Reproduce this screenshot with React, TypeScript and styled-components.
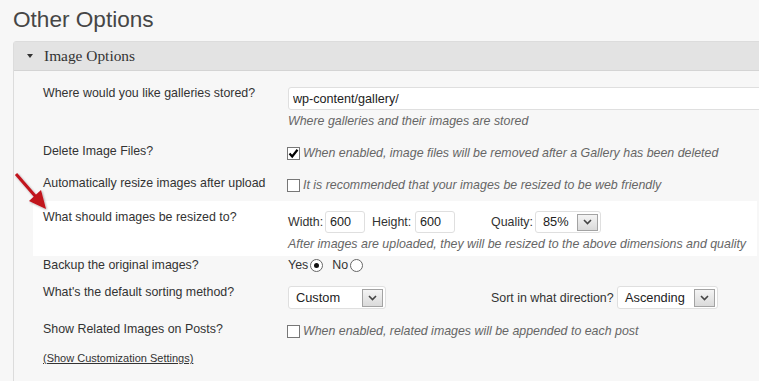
import React from "react";
import styled, { createGlobalStyle } from "styled-components";

const GlobalStyle = createGlobalStyle`
  html, body {
    margin: 0;
    padding: 0;
    background: #f7f7f7;
  }
  body {
    font-family: "Liberation Sans", Arial, sans-serif;
    color: #333;
    overflow: hidden;
  }
`;

const Page = styled.div`
  position: relative;
  width: 759px;
  height: 381px;
  overflow: hidden;
  padding-left: 13px;
  box-sizing: border-box;
`;

const Title = styled.h2`
  margin: 0;
  padding-top: 6px;
  font-size: 22.6px;
  line-height: 28px;
  font-weight: normal;
  color: #464646;
`;

const Panel = styled.div`
  margin-top: 7px;
  width: 780px;
  height: 400px;
  border: 1px solid #dcdcdc;
  border-radius: 3px 0 0 0;
  background: #f7f7f7;
`;

const PanelHeader = styled.div`
  display: flex;
  align-items: center;
  height: 28px;
  padding-left: 13px;
  background: #e3e3e3;
  border-bottom: 1px solid #d4d4d4;
  font-family: "Liberation Serif", "Times New Roman", serif;
  font-size: 15.4px;
  color: #333;
`;

const Caret = styled.span`
  width: 0;
  height: 0;
  margin-right: 11px;
  border-left: 3.5px solid transparent;
  border-right: 3.5px solid transparent;
  border-top: 4px solid #333;
`;

const PanelBody = styled.div`
  padding: 0 37px 0 19px;
`;

const Row = styled.div<{ $top: number; $highlight?: boolean }>`
  display: grid;
  grid-template-columns: 245px 1fr;
  align-items: start;
  margin-top: ${(p) => (p.$highlight ? 8 : 0)}px;
  padding: ${(p) => p.$top}px 0 ${(p) => (p.$highlight ? 4 : 0)}px 10px;
  background: ${(p) => (p.$highlight ? "#fff" : "transparent")};
`;

const Label = styled.div`
  font-size: 12.4px;
  line-height: 16px;
  color: #333;
`;

const Field = styled.div`
  font-size: 12.4px;
  line-height: 16px;
  color: #333;
`;

const TextInput = styled.input<{ $w: number; $h: number }>`
  display: block;
  box-sizing: border-box;
  width: ${(p) => p.$w}px;
  height: ${(p) => p.$h}px;
  margin: 0;
  padding: 0 4px;
  border: 1px solid #dfdfdf;
  border-radius: 3px;
  background: #fff;
  font-family: "Liberation Sans", Arial, sans-serif;
  font-size: 12.6px;
  color: #222;
  outline: none;
`;

const Desc = styled.div`
  margin-top: 3px;
  font-style: italic;
  color: #666;
  white-space: nowrap;
`;

const Line = styled.div<{ $top?: number }>`
  display: flex;
  align-items: center;
  margin-top: ${(p) => p.$top ?? 0}px;
  white-space: nowrap;
`;

const CheckLine = styled.div`
  display: flex;
  align-items: center;
  gap: 3px;
  padding-top: 2px;
  margin-left: -1px;
  font-style: italic;
  color: #666;
  white-space: nowrap;
`;

const Box = styled.span`
  display: inline-flex;
  align-items: center;
  justify-content: center;
  box-sizing: border-box;
  width: 13px;
  height: 13px;
  border: 1px solid #777;
  background: #fff;
`;

const InlineLabel = styled.span<{ $w: number; $left?: number }>`
  display: inline-block;
  width: ${(p) => p.$w}px;
  margin-left: ${(p) => p.$left ?? 0}px;
  white-space: nowrap;
`;

const Select = styled.div<{ $w: number; $h: number }>`
  display: flex;
  align-items: center;
  box-sizing: border-box;
  width: ${(p) => p.$w}px;
  height: ${(p) => p.$h}px;
  padding: 0 2px 0 7px;
  border: 1px solid #dfdfdf;
  border-radius: 3px;
  background: #fff;
  font-size: 12.8px;
  color: #222;
`;

const SelectButton = styled.span<{ $h: number }>`
  display: inline-flex;
  align-items: center;
  justify-content: center;
  box-sizing: border-box;
  margin-left: auto;
  width: 21px;
  height: ${(p) => p.$h}px;
  border: 1px solid #a3a3a3;
  background: linear-gradient(#f4f4f4, #dadada);
`;

const Radio = styled.span<{ $checked?: boolean }>`
  display: inline-flex;
  align-items: center;
  justify-content: center;
  box-sizing: border-box;
  width: 13px;
  height: 13px;
  margin: 0 9px 0 2px;
  border: 1px solid #666;
  border-radius: 50%;
  background: #fff;
  &::after {
    content: "";
    display: ${(p) => (p.$checked ? "block" : "none")};
    width: 5px;
    height: 5px;
    border-radius: 50%;
    background: #111;
  }
`;

const CustomLink = styled.a`
  display: block;
  padding: 11px 0 0 10px;
  font-size: 11px;
  line-height: 16px;
  color: #333;
  text-decoration: underline;
`;

const Pointer = styled.svg`
  position: absolute;
  left: 0;
  top: 160px;
  pointer-events: none;
`;

function Check() {
  return (
    <svg width="11" height="11" viewBox="0 0 11 11">
      <path d="M1.5 5.5 L4.2 8.5 L9.5 1.8" fill="none" stroke="#000" strokeWidth="2.2" />
    </svg>
  );
}

function Dropdown({ w, h, value }: { w: number; h: number; value: string }) {
  return (
    <Select $w={w} $h={h}>
      {value}
      <SelectButton $h={h - 5}>
        <svg width="9" height="6" viewBox="0 0 9 6">
          <path d="M1 1 L4.5 4.5 L8 1" fill="none" stroke="#444" strokeWidth="1.6" />
        </svg>
      </SelectButton>
    </Select>
  );
}

export default function App() {
  return (
    <Page>
      <GlobalStyle />
      <Title>Other Options</Title>
      <Panel>
        <PanelHeader>
          <Caret />
          Image Options
        </PanelHeader>
        <PanelBody>
          <Row $top={14}>
            <Label>Where would you like galleries stored?</Label>
            <Field>
              <Line $top={2}>
                <TextInput $w={500} $h={23} defaultValue="wp-content/gallery/" />
              </Line>
              <Desc>Where galleries and their images are stored</Desc>
            </Field>
          </Row>
          <Row $top={14}>
            <Label>Delete Image Files?</Label>
            <Field>
              <CheckLine>
                <Box>
                  <Check />
                </Box>
                When enabled, image files will be removed after a Gallery has been deleted
              </CheckLine>
            </Field>
          </Row>
          <Row $top={14}>
            <Label>Automatically resize images after upload</Label>
            <Field>
              <CheckLine>
                <Box />
                It is recommended that your images be resized to be web friendly
              </CheckLine>
            </Field>
          </Row>
          <Row $top={8} $highlight>
            <Label>What should images be resized to?</Label>
            <Field>
              <Line $top={2}>
                <InlineLabel $w={37}>Width:</InlineLabel>
                <TextInput $w={40} $h={22} defaultValue="600" />
                <InlineLabel $w={43} $left={7}>Height:</InlineLabel>
                <TextInput $w={40} $h={22} defaultValue="600" />
                <InlineLabel $w={44} $left={36}>Quality:</InlineLabel>
                <Dropdown w={66} h={22} value="85%" />
              </Line>
              <Desc>After images are uploaded, they will be resized to the above dimensions and quality</Desc>
            </Field>
          </Row>
          <Row $top={1}>
            <Label>Backup the original images?</Label>
            <Field>
              <Line>
                Yes
                <Radio $checked />
                No
                <Radio />
              </Line>
            </Field>
          </Row>
          <Row $top={11}>
            <Label>What's the default sorting method?</Label>
            <Field>
              <Line $top={2}>
                <Dropdown w={98} h={23} value="Custom" />
                <InlineLabel $w={126} $left={105}>Sort in what direction?</InlineLabel>
                <Dropdown w={101} h={23} value="Ascending" />
              </Line>
            </Field>
          </Row>
          <Row $top={12}>
            <Label>Show Related Images on Posts?</Label>
            <Field>
              <CheckLine>
                <Box />
                When enabled, related images will be appended to each post
              </CheckLine>
            </Field>
          </Row>
          <CustomLink href="#">(Show Customization Settings)</CustomLink>
        </PanelBody>
      </Panel>
      <Pointer width="60" height="60" viewBox="0 160 60 60">
        <defs>
          <filter id="shade" x="-30%" y="-30%" width="160%" height="160%">
            <feDropShadow dx="1" dy="1" stdDeviation="1" floodColor="#000" floodOpacity="0.35" />
          </filter>
        </defs>
        <g filter="url(#shade)">
          <line x1="16" y1="174" x2="36" y2="197" stroke="#c1121c" strokeWidth="3" />
          <polygon points="46,209 29,201 41,190" fill="#c1121c" />
        </g>
      </Pointer>
    </Page>
  );
}
